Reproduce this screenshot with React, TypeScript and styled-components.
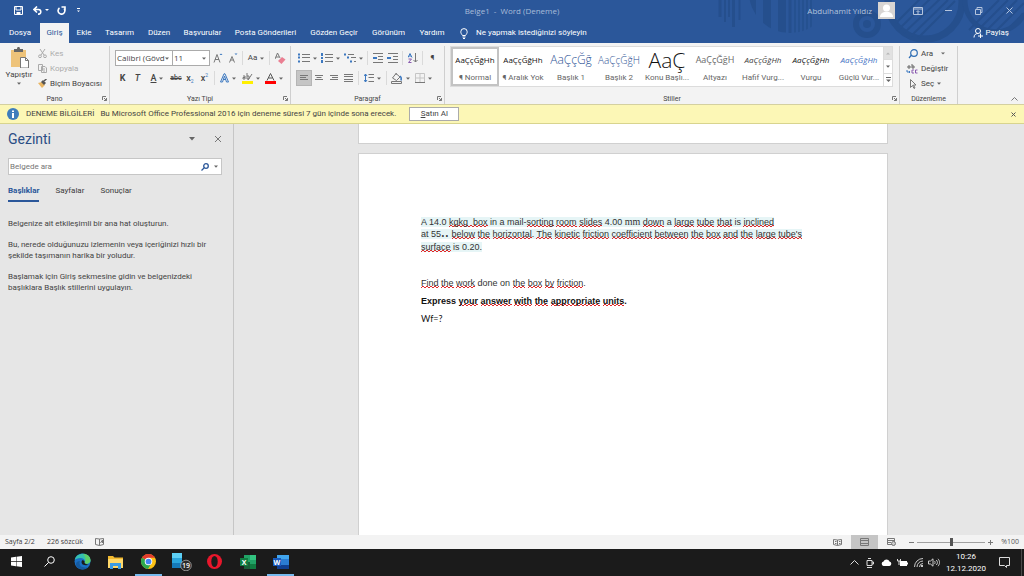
import React from "react";
import styled, { createGlobalStyle, css } from "styled-components";

const ui = `Roboto, "Open Sans", sans-serif`;
const blue = "#2b579a";

const GlobalStyle = createGlobalStyle`
  * { box-sizing: border-box; }
  body { margin: 0; font-family: ${ui}; font-size: 7px; line-height: 10px; color: #3b3b3b; background: #e6e6e6; }
  button, input, select { font: inherit; color: inherit; margin: 0; padding: 0; border: 0; background: none; border-radius: 0; }
  svg { display: block; flex: none; }
  p, h1, h2 { margin: 0; font-weight: 400; }
`;

const Window = styled.div`display: flex; flex-direction: column; height: 100vh; overflow: hidden;`;

/* ---------- title bar and tabs ---------- */
const Header = styled.header`position: relative; background: ${blue}; color: #fff; flex: none;`;
const Art = styled.svg`position: absolute; right: 0; top: 0;`;
const TitleBar = styled.div`
  position: relative; display: grid; grid-template-columns: 1fr auto 1fr; align-items: center; height: 23px; padding-bottom: 2px;
  font-family: "Open Sans", sans-serif;
`;
const QuickAccess = styled.div`display: flex; align-items: center; padding-left: 8px;`;
const TitleButton = styled.button<{ $w: number }>`
  display: flex; align-items: center; justify-content: center; width: ${p => p.$w}px; height: 20px; flex: none;
`;
const DocTitle = styled.h1`font-size: 8px; line-height: 12px; color: #a9bcd9; white-space: pre;`;
const Account = styled.div`display: flex; align-items: center; justify-content: flex-end; color: #b4c4dd; font-size: 8px;`;
const Avatar = styled.span`margin: 0 8px 0 6px;`;
const TabBar = styled.nav`position: relative; display: flex; height: 20px; font-size: 8px; white-space: nowrap;`;
const Tab = styled.button<{ $w: number; $active?: boolean }>`
  width: ${p => p.$w}px; height: 20px; text-align: center; flex: none;
  ${p => p.$active && css`background: #f3f3f3; color: ${blue};`}
`;
const TellMe = styled.button`display: flex; align-items: center; gap: 8px; margin-left: 9px;`;
const Share = styled.button`display: flex; align-items: center; gap: 2px; margin: 0 15px 0 auto;`;

/* ---------- ribbon ---------- */
const Ribbon = styled.section`display: flex; background: #f3f3f3; padding-top: 3px; height: 61px; flex: none; color: #444;`;
const Group = styled.div<{ $w?: number }>`
  display: flex; flex-direction: column; position: relative;
  ${p => (p.$w ? css`width: ${p.$w}px; flex: none;` : css`flex: 1; min-width: 0;`)}
  border-right: 1px solid #cfcfcf;
`;
const GroupBody = styled.div`flex: 1; min-height: 0; display: flex;`;
const GroupLabel = styled.div`display: grid; grid-template-columns: 10px 1fr 10px; height: 11px; line-height: 10px; text-align: center; align-items: center;`;
const Launcher = styled.button`display: flex; align-items: center; justify-content: center; height: 10px;`;
const PasteButton = styled.button`display: flex; flex-direction: column; align-items: center; width: 38px; padding-top: 1px; font-size: 8px; gap: 2px;`;
const Stack = styled.div`display: flex; flex-direction: column;`;
const ListButton = styled.button<{ $off?: boolean }>`
  display: flex; align-items: center; gap: 3px; height: 15px; font-size: 8px; white-space: nowrap; text-align: left;
  ${p => p.$off && css`color: #adadad;`}
`;
const Rows = styled.div`display: flex; flex-direction: column; gap: 4px; padding: 4px 0 0 5px;`;
const Row = styled.div`display: flex; align-items: center; height: 16px;`;
const Tool = styled.button<{ $w?: number; $on?: boolean }>`
  display: flex; align-items: center; justify-content: center; gap: 3px; width: ${p => p.$w ?? 15}px; height: 16px; flex: none; font-size: 8px;
  ${p => p.$on && css`background: #c5c5c5; border: 1px solid #b5b5b5;`}
`;
const Rule = styled.span`width: 1px; height: 14px; background: #dadada; margin: 0 2px;`;
const Combo = styled.label<{ $w: number }>`
  display: flex; align-items: center; width: ${p => p.$w}px; height: 16px; border: 1px solid #ababab; background: #fff; padding: 0 3px 0 1px;
  & + & { border-left: 0; }
  select { appearance: none; flex: 1; min-width: 0; font-family: "Open Sans", sans-serif; font-size: 8px; line-height: 12px; overflow: hidden; }
`;
const Letter = styled.span<{ $b?: boolean; $i?: boolean; $u?: boolean }>`
  font-size: 9px; line-height: 11px; font-weight: ${p => (p.$b ? 700 : 500)}; font-style: ${p => (p.$i ? "italic" : "normal")};
  text-decoration: ${p => (p.$u ? "underline" : "none")};
`;
const Struck = styled.s`font-size: 7px; line-height: 10px; font-weight: 500;`;
const Tiny = styled.sub<{ $up?: boolean }>`font-size: 5px; line-height: 5px; color: #3c78c0; align-self: ${p => (p.$up ? "flex-start" : "flex-end")};`;
const Tight = styled.span`display: flex; align-items: center; height: 11px;`;
const Bar = styled.span<{ $c: string }>`display: block; width: 11px; height: 3px; background: ${p => p.$c};`;
const Inked = styled.span`display: flex; flex-direction: column; align-items: center; line-height: 8px;`;

const Gallery = styled.div`display: flex; height: 41px; margin: 0 6px 0 5px; background: #fff; border: 1px solid #dcdcdc; flex: 1; min-width: 0;`;
const Style = styled.button<{ $on?: boolean }>`
  display: flex; flex-direction: column; align-items: center; width: 48px; height: 39px; flex: none;
  ${p => p.$on && css`box-shadow: inset 0 0 0 2px #c3c3c3;`}
`;
const Sample = styled.span<{ $size: number; $c: string; $i?: boolean }>`
  height: 26px; width: 44px; text-align: center; white-space: nowrap; font-family: "Open Sans", sans-serif; font-size: ${p => p.$size}px; line-height: 26px;
  color: ${p => p.$c}; font-style: ${p => (p.$i ? "italic" : "normal")}; font-weight: ${p => (p.$size > 9 ? 300 : 400)};
`;
const StyleName = styled.span`font-size: 8px; line-height: 10px; color: #666; white-space: nowrap;`;
const Scroller = styled.div`display: flex; flex-direction: column; width: 10px; margin-left: auto; border-left: 1px solid #dcdcdc;`;
const ScrollButton = styled.button<{ $off?: boolean }>`
  flex: 1; display: flex; align-items: center; justify-content: center; background: ${p => (p.$off ? "#e1e1e1" : "#fff")};
  & + & { border-top: 1px solid #dcdcdc; }
`;
const RibbonEnd = styled.div`width: 66px; display: flex; align-items: flex-end; justify-content: flex-end; padding: 0 6px 3px 0;`;

/* ---------- message bar ---------- */
const Message = styled.div`
  display: flex; align-items: center; height: 20px; flex: none; padding: 0 8px 0 7px; background: #fcf7b6; border-top: 1px solid #d4d0a0; border-bottom: 1px solid #d8d48e; color: #444; white-space: nowrap; font-size: 8px;
`;
const MessageTitle = styled.strong`font-weight: 400; margin: 0 6px 0 7px;`;
const Buy = styled.button`width: 50px; height: 14px; margin-left: 13px; background: #fff; border: 1px solid #ababab; line-height: 12px;`;
const Close = styled.button`margin-left: auto;`;

/* ---------- workspace ---------- */
const Work = styled.div`display: flex; flex: 1; min-height: 0;`;
const Pane = styled.aside`width: 234px; flex: none; border-right: 1px solid #c6c6c6; padding: 6px 11px 0 8px; font-size: 8px; line-height: 11px;`;
const PaneHead = styled.div`display: flex; align-items: center; height: 18px; gap: 19px;`;
const PaneTitle = styled.h2`flex: 1; font-size: 14px; line-height: 18px; color: #2a4d85;`;
const Search = styled.label`
  display: flex; align-items: center; gap: 5px; height: 17px; margin: 10px 0 0; padding: 0 3px 0 1px; border: 1px solid #c6c6c6; background: #fff;
  input { flex: 1; min-width: 0; outline: 0; }
  input::placeholder { color: #767676; opacity: 1; }
`;
const PaneTabs = styled.div`display: flex; margin: 10px 0 16px; gap: 16px;`;
const PaneTab = styled.button<{ $on?: boolean }>`
  height: 17px; padding-bottom: 4px; border-bottom: 2px solid transparent;
  ${p => p.$on && css`color: ${blue}; font-weight: 700; border-color: ${blue};`}
`;
const Hint = styled.p`margin-bottom: 10px; color: #444;`;

const Canvas = styled.main`flex: 1; min-width: 0; display: flex; flex-direction: column; align-items: center; gap: 9px; padding-right: 12px; overflow: hidden;`;
const PageEnd = styled.div`width: 530px; max-width: 100%; height: 20px; flex: none; background: #fff; border: 1px solid #d0d0d0; border-top: 0;`;
const Page = styled.article`
  width: 530px; max-width: 100%; flex: 1; background: #fff; border: 1px solid #d0d0d0; border-bottom: 0; padding: 62px 62px 0;
  font-family: "Liberation Sans", Arial, sans-serif; font-size: 9px; line-height: 12px; color: #333;
`;
const Problem = styled.p`margin-bottom: 24px; white-space: nowrap;`;
const Shade = styled.span`background: #e6f5f6;`;
const Para = styled.p<{ $b?: boolean }>`margin-bottom: 6px; color: ${p => (p.$b ? "#111" : "#333")}; font-weight: ${p => (p.$b ? 700 : 400)};`;
const Answer = styled.p`font-family: Lato, "Open Sans", sans-serif; color: #111;`;
const Misspelt = styled.span`
  background: url("data:image/svg+xml,%3Csvg xmlns='http://www.w3.org/2000/svg' width='4' height='2'%3E%3Cpath d='M0 2L2 0L4 2' fill='none' stroke='%23e02828'/%3E%3C/svg%3E") left bottom repeat-x;
`;
const Serif = styled.span`font-family: "Liberation Serif", serif; font-size: 10px;`;
const Degrees = styled.span`font-size: 6px;`;

/* ---------- status bar and taskbar ---------- */
const Status = styled.footer`display: flex; align-items: center; height: 14px; flex: none; background: #f3f3f3; padding: 0 5px; gap: 12px; font-family: "Open Sans", sans-serif;`;
const View = styled.button<{ $on?: boolean }>`display: flex; align-items: center; justify-content: center; width: 27px; height: 14px; background: ${p => (p.$on ? "#c5c5c5" : "none")};`;
const Views = styled.div`display: flex; margin-left: auto;`;
const Zoom = styled.div`display: flex; align-items: center; gap: 3px; margin-left: -8px; color: #555;`;
const Range = styled.input`
  appearance: none; width: 68px; height: 10px; background: linear-gradient(#a0a0a0, #a0a0a0) center / 100% 1px no-repeat;
  &::-webkit-slider-thumb { appearance: none; width: 3px; height: 8px; background: #555; }
`;
const Percent = styled.span`margin-left: 5px;`;

const Taskbar = styled.footer`display: flex; height: 27px; flex: none; background: #1b1b1b; color: #fff;`;
const Task = styled.button<{ $open?: boolean }>`
  display: flex; align-items: center; justify-content: center; width: 33px; height: 27px; border-bottom: 2px solid transparent;
  ${p => p.$open && css`box-shadow: inset 0 -2px #76b9ed; border: 0; padding-bottom: 2px; width: 27px; margin: 0 3px;`}
`;
const Tray = styled.div`display: flex; align-items: center; margin-left: auto;`;
const TrayButton = styled.button`width: 16px; height: 27px; display: flex; align-items: center; justify-content: center;`;
const Clock = styled.time`width: 48px; text-align: center; font-size: 8px; line-height: 12px;`;
const Notice = styled.button`width: 28px; display: flex; justify-content: center; margin-right: 3px;`;
const Desktop = styled.span`width: 3px; height: 27px; border-left: 1px solid #4a4a4a;`;

type IconProps = { w?: number; h?: number; box?: string; stroke?: string; sw?: number; children: React.ReactNode };
const Icon = ({ w = 10, h = 10, box, stroke = "#777", sw = 1, children }: IconProps) => (
  <svg width={w} height={h} viewBox={box ?? `0 0 ${w} ${h}`} fill="none" stroke={stroke} strokeWidth={sw} aria-hidden="true">{children}</svg>
);
const Caret = () => (
  <Icon w={4} h={3} stroke="none"><path d="M0 .5h4L2 2.7z" fill="#666" /></Icon>
);

const tabs: [string, number][] = [["Dosya", 40], ["Giriş", 29], ["Ekle", 30], ["Tasarım", 41], ["Düzen", 38], ["Başvurular", 49], ["Posta Gönderileri", 77], ["Gözden Geçir", 60], ["Görünüm", 49], ["Yardım", 38]];
const styles: { name: string; text: string; size: number; c: string; i?: boolean }[] = [
  { name: "¶ Normal", text: "AaÇçĞğHh", size: 8, c: "#111" },
  { name: "¶ Aralık Yok", text: "AaÇçĞğHh", size: 8, c: "#111" },
  { name: "Başlık 1", text: "AaÇçĞğ", size: 12, c: "#2f5496" },
  { name: "Başlık 2", text: "AaÇçĞğH", size: 10, c: "#2f5496" },
  { name: "Konu Başlı...", text: "AaÇ", size: 21, c: "#111" },
  { name: "Altyazı", text: "AaÇçĞğH", size: 9, c: "#6a6a6a" },
  { name: "Hafif Vurg...", text: "AaÇçĞğHh", size: 8, c: "#404040", i: true },
  { name: "Vurgu", text: "AaÇçĞğHh", size: 8, c: "#111", i: true },
  { name: "Güçlü Vur...", text: "AaÇçĞğHh", size: 8, c: "#4472c4", i: true },
];

const HeaderArt = () => (
  <Art width="310" height="43" viewBox="714 0 310 43" fill="none" stroke="#254f8d" aria-hidden="true">
    <defs><clipPath id="disc"><circle cx="790" cy="-8" r="41" /></clipPath></defs>
    <path d="M720 0v17M733.500 0v27" strokeWidth="3" /><path d="M725 0v22M729 0v17M739.500 0v20" strokeWidth="2" />
    <g clipPath="url(#disc)"><path d="M752 0v40M767 0v40M782 0v40" strokeWidth="8" /><path d="M790 0v40" strokeWidth="3" /><path d="M795 0v40M799 0v40M803 0v40M807 0v40M811 0v40" strokeWidth="1.500" /></g>
    <circle cx="867" cy="24" r="11" strokeWidth="6" /><circle cx="867" cy="24" r="4" fill="#254f8d" stroke="none" />
    <circle cx="925" cy="2" r="37" strokeWidth="7" />
    <path d="M896 23l24-24M899 29l31-30M904 33l36-34M910 37l38-37M918 38l37-37" strokeWidth="2" />
    <path d="M969 30l30-30M975 33l33-33M983 34l34-34M991 36l33-33M1001 36l23-23" strokeWidth="2" />
    <path d="M965 0a31 31 0 0 0 59 14" strokeWidth="5" />
  </Art>
);

const Lines = ({ a = "", b }: { a?: string; b: string }) => (
  <Icon w={12} h={10}><path d={b} />{a && <path d={a} stroke="#3c78c0" strokeWidth="2" />}</Icon>
);
const LauncherIcon = () => <Icon w={5} h={5}><path d="M.5 4V.5H4M2 2l2.500 2.500M4.500 2v2.500H2" /></Icon>;
const W = Misspelt;

export default function App() {
  return (
    <Window>
      <GlobalStyle />
      <Header>
        <HeaderArt />
        <TitleBar>
          <QuickAccess>
            <TitleButton $w={20} aria-label="Kaydet"><Icon w={9} h={9} stroke="#fff"><path d="M.5.5h8v8h-8zM2 .5v3.500h5V.5" /><path d="M2.500 6h4v3h-4z" fill="#fff" stroke="none" /></Icon></TitleButton>
            <TitleButton $w={26} aria-label="Geri al"><Icon w={9} h={9} stroke="#fff" sw={1.6}><path d="M1 3.500h4.500a2.300 2.300 0 0 1 0 4.600H5M4 .5l-3 3 3 3" /></Icon><Icon w={8} h={3} stroke="none"><path d="M3 0h4L5 2z" fill="#fff" /></Icon></TitleButton>
            <TitleButton $w={14} aria-label="Yinele"><Icon w={9} h={9} stroke="#fff" sw={1.6}><path d="M2.500 2A3.400 3.400 0 1 0 7 2.500M4.500 1h3.500v3.500" /></Icon></TitleButton>
            <TitleButton $w={22} aria-label="Özelleştir"><Icon w={4} h={5} stroke="none"><path d="M0 0h3v1H0zM0 2.500h3L1.500 4z" fill="#fff" /></Icon></TitleButton>
          </QuickAccess>
          <DocTitle>Belge1  -  Word (Deneme)</DocTitle>
          <Account>
            <span>Abdulhamit Yıldız</span>
            <Avatar><Icon w={17} h={17} stroke="none"><path d="M0 0h17v17H0z" fill="#d8d5d3" /><circle cx="8.500" cy="6" r="3.500" fill="#fff" /><path d="M2 15c0-7 13-7 13 0z" fill="#fff" /></Icon></Avatar>
            <TitleButton $w={30} aria-label="Şerit seçenekleri"><Icon w={10} h={8} stroke="#b4c4dd"><path d="M.5.5h9v7h-9zM.5 2h9M5 7V4M3.500 5L5 3.500 6.500 5" /></Icon></TitleButton>
            <TitleButton $w={31} aria-label="Küçült"><Icon w={7} h={2} stroke="#b4c4dd"><path d="M0 .5h7" /></Icon></TitleButton>
            <TitleButton $w={30} aria-label="Geri yükle"><Icon w={8} h={8} stroke="#b4c4dd"><path d="M.5 2.500h5v5h-5zM2 2.500v-2h5v5H5.500" /></Icon></TitleButton>
            <TitleButton $w={30} aria-label="Kapat"><Icon w={7} h={7} stroke="#b4c4dd"><path d="M.5.5l6 6M6.500.5l-6 6" /></Icon></TitleButton>
          </Account>
        </TitleBar>
        <TabBar>
          {tabs.map(([t, w], i) => <Tab key={t} $w={w} $active={i === 1}>{t}</Tab>)}
          <TellMe><Icon w={8} h={11} stroke="#fff"><path d="M2.500 7.500C1.500 6 .8 5.200.8 3.800a3.200 3.200 0 0 1 6.400 0C7.200 5.200 6.500 6 5.500 7.500zM2.500 9h3M3 10.500h2" /></Icon>Ne yapmak istediğinizi söyleyin</TellMe>
          <Share><Icon w={10} h={10} stroke="#fff"><circle cx="5" cy="3" r="2.500" /><path d="M1 9.500c0-3 2-4 4-4M5 8h5M7.500 5.500v5" /></Icon>Paylaş</Share>
        </TabBar>
      </Header>

      <Ribbon>
        <Group $w={110}>
          <GroupBody>
            <PasteButton>
              <Icon w={20} h={21} stroke="none"><path d="M2 3h15v17H2z" fill="#eec37a" /><path d="M5 2h3c0-3 3-3 3 0h3v3H5z" fill="#666" /><path d="M11.500 10.500h5l3 3v7.500h-8z" fill="#fff" stroke="#777" /><path d="M16.500 10.500v3h3" stroke="#777" fill="none" /></Icon>
              Yapıştır<Caret />
            </PasteButton>
            <Stack>
              <ListButton $off><Icon w={9} h={9} stroke="#aaa"><path d="M2 0l4 6M7 0L3 6" /><circle cx="2" cy="7.300" r="1.400" /><circle cx="7" cy="7.300" r="1.400" /></Icon>Kes</ListButton>
              <ListButton $off><Icon w={9} h={9} stroke="#aaa"><path d="M.5.5h4v6h-4zM3.500 2.500H7L8.500 4v4.500h-5zM5 5h2M5 7h2" /></Icon>Kopyala</ListButton>
              <ListButton><Icon w={9} h={9} stroke="none"><path d="M0 4l4-1 3 3-3 3z" fill="#e9b562" /><path d="M3 3l2-2 3 3-2 2z" fill="#555" /><path d="M6 2l2.500-2" stroke="#555" strokeWidth="1.500" /></Icon>Biçim Boyacısı</ListButton>
            </Stack>
          </GroupBody>
          <GroupLabel><span /><span>Pano</span><Launcher aria-label="Pano ayarları"><LauncherIcon /></Launcher></GroupLabel>
        </Group>

        <Group $w={181}>
          <GroupBody>
            <Rows>
              <Row>
                <Combo $w={58}><select aria-label="Yazı tipi"><option>Calibri (Gövd</option></select><Caret /></Combo>
                <Combo $w={37}><select aria-label="Boyut"><option>11</option></select><Caret /></Combo>
                <Tool $w={15} aria-label="Büyüt"><Icon><path d="M1 9.500L4 1.500 7 9.500M2 6.500h4" /><path d="M6.500 2L8 .5 9.500 2z" fill="#3c78c0" stroke="none" /></Icon></Tool>
                <Tool $w={15} aria-label="Küçült"><Icon><path d="M1.500 9.500L4 3.500 6.500 9.500M2.500 7h3" /><path d="M6.500.5h3L8 2z" fill="#3c78c0" stroke="none" /></Icon></Tool>
                <Rule />
                <Tool $w={22}>Aa<Caret /></Tool>
                <Rule />
                <Tool $w={17} aria-label="Biçimlendirmeyi temizle"><Icon w={11} h={11}><path d="M0 6l2.500-6L5 5M1 4h3" /><path d="M3 8l4-4 3.500 2.500L6.500 11z" fill="#ea7f92" stroke="none" /></Icon></Tool>
              </Row>
              <Row>
                <Tool $w={15}><Letter $b>K</Letter></Tool>
                <Tool $w={15}><Letter $i>T</Letter></Tool>
                <Tool $w={24}><Letter $u>A</Letter><Caret /></Tool>
                <Tool $w={14}><Struck>abc</Struck></Tool>
                <Tool $w={14}><Tight><Letter>x</Letter><Tiny>2</Tiny></Tight></Tool>
                <Tool $w={15}><Tight><Letter>x</Letter><Tiny $up>2</Tiny></Tight></Tool>
                <Rule />
                <Tool $w={22} aria-label="Metin efektleri"><Icon w={9} h={10} stroke="#3c78c0"><path d="M.5 9L4 .8h1L8.500 9H6.500L4.500 3 2.500 9zM3 6.500h3" /></Icon><Caret /></Tool>
                <Tool $w={24} aria-label="Vurgu rengi"><Inked><Icon w={11} h={8}><path d="M1 3h2v3H1V4.500h2M5 0v6h2V3H5M10 1L6 7" /></Icon><Bar $c="#ffef00" /></Inked><Caret /></Tool>
                <Tool $w={22} aria-label="Yazı rengi"><Inked><Icon w={9} h={8} stroke="#555"><path d="M1 7.500L4.500 .5 8 7.500M2.500 5h4" /></Icon><Bar $c="#f00" /></Inked><Caret /></Tool>
              </Row>
            </Rows>
          </GroupBody>
          <GroupLabel><span /><span>Yazı Tipi</span><Launcher aria-label="Yazı tipi ayarları"><LauncherIcon /></Launcher></GroupLabel>
        </Group>

        <Group $w={154}>
          <GroupBody>
            <Rows>
              <Row>
                <Tool $w={23} aria-label="Madde işaretleri"><Lines a="M0 1.500h2M0 4.500h2M0 8.500h2" b="M4 1.500h8M4 4.500h8M4 8.500h8" /><Caret /></Tool>
                <Tool $w={23} aria-label="Numaralandırma"><Lines a="M1 0v3M1 4v2M1 7v3" b="M4 1.500h8M4 4.500h8M4 8.500h8" /><Caret /></Tool>
                <Tool $w={23} aria-label="Çok düzeyli liste"><Lines a="M0 1.500h2M3 4.500h2M6 8.500h2" b="M4 1.500h6M7 4.500h5M10 8.500h2" /><Caret /></Tool>
                <Rule />
                <Tool aria-label="Girintiyi azalt"><Lines b="M1 .5h10M6 3.500h5M6 6.500h5M1 9.500h10" a="M5 5H1" /></Tool>
                <Tool aria-label="Girintiyi artır"><Lines b="M1 .5h10M6 3.500h5M6 6.500h5M1 9.500h10" a="M0 5h4" /></Tool>
                <Rule />
                <Tool aria-label="Sırala"><Icon><path d="M0 4.500L2 .5l2 4M1 3h2" stroke="#3c78c0" /><path d="M.5 6h3L.5 9.500h3" stroke="#8a5bb0" /><path d="M7.500 0v9M5.500 7l2 2 2-2" /></Icon></Tool>
                <Rule />
                <Tool aria-label="Paragraf işaretleri">¶</Tool>
              </Row>
              <Row>
                <Tool $w={16} $on aria-label="Sola hizala"><Icon w={8}><path d="M0 2.500h8M0 4.500h6M0 6.500h8" /></Icon></Tool>
                <Tool $w={14} aria-label="Ortala"><Icon w={8}><path d="M0 2.500h8M1.500 4.500h5M0 6.500h8" /></Icon></Tool>
                <Tool aria-label="Sağa hizala"><Icon w={8}><path d="M0 2.500h8M2 4.500h6M0 6.500h8" /></Icon></Tool>
                <Tool aria-label="İki yana yasla"><Icon w={9}><path d="M0 1.500h9M0 3.500h9M0 6.500h9M0 8.500h9" /></Icon></Tool>
                <Rule />
                <Tool $w={23} aria-label="Satır aralığı"><Icon><path d="M4.500 1.500H10M4.500 4.500H10M4.500 8.500H10" /><path d="M1.500 1v8M0 3l1.500-2L3 3M0 7l1.500 2L3 7" stroke="#3c78c0" /></Icon><Caret /></Tool>
                <Rule />
                <Tool $w={23} aria-label="Gölgelendirme"><Icon w={12} h={11}><path d="M5 .5L1.500 5l4 2.500L9 4zM5 2V0M.5 8.500h10v2H.5z" /><path d="M9 3c1.500 1 1.500 2.500 1 4.500" stroke="#3c78c0" strokeWidth="1.500" /></Icon><Caret /></Tool>
                <Tool $w={23} aria-label="Kenarlıklar"><Icon><path d="M.5.5h9v9h-9zM5 1v8M1 5h8" stroke="#c5c5c5" /><path d="M0 9.500h10" /></Icon><Caret /></Tool>
              </Row>
            </Rows>
          </GroupBody>
          <GroupLabel><span /><span>Paragraf</span><Launcher aria-label="Paragraf ayarları"><LauncherIcon /></Launcher></GroupLabel>
        </Group>

        <Group>
          <GroupBody>
            <Gallery>
              {styles.map((s, i) => (
                <Style key={s.name} $on={i === 0}>
                  <Sample $size={s.size} $c={s.c} $i={s.i}>{s.text}</Sample>
                  <StyleName>{s.name}</StyleName>
                </Style>
              ))}
              <Scroller>
                <ScrollButton $off aria-label="Yukarı"><Icon w={4} h={3} stroke="none"><path d="M0 2.500h4L2 .5z" fill="#b5b5b5" /></Icon></ScrollButton>
                <ScrollButton aria-label="Aşağı"><Caret /></ScrollButton>
                <ScrollButton aria-label="Diğer"><Icon w={5} h={5} stroke="none"><path d="M0 0h5v1H0zM0 2.500h5L2.500 5z" fill="#666" /></Icon></ScrollButton>
              </Scroller>
            </Gallery>
          </GroupBody>
          <GroupLabel><span /><span>Stiller</span><Launcher aria-label="Stil ayarları"><LauncherIcon /></Launcher></GroupLabel>
        </Group>

        <Group $w={58}>
          <GroupBody>
            <Stack>
              <ListButton><Icon w={18} h={10} stroke="#2e6db4" sw={1.2}><circle cx="14" cy="4" r="3.300" /><path d="M11.500 6L9 9" /></Icon>Ara<Icon w={9} h={3} stroke="none"><path d="M5 .5h4L7 2.500z" fill="#666" /></Icon></ListButton>
              <ListButton><Icon w={18} h={10}><path d="M8 2h2v2H8zM12 0v4h2V2h-2" stroke="#666" /><path d="M7 6v2h3M9 7l1 1-1 1" stroke="#3c78c0" /><path d="M14 6h-2v3h2M17.500 6h-2v3h2" stroke="#8a5bb0" /></Icon>Değiştir</ListButton>
              <ListButton><Icon w={18} h={10}><path d="M10.500.5v8l2-2 1.500 3 1-.5-1.500-3h2.500z" /></Icon>Seç<Caret /></ListButton>
            </Stack>
          </GroupBody>
          <GroupLabel><span /><span>Düzenleme</span><span /></GroupLabel>
        </Group>
        <RibbonEnd><button aria-label="Şeridi daralt"><Icon w={7} h={4}><path d="M.5 3.500l3-3 3 3" /></Icon></button></RibbonEnd>
      </Ribbon>

      <Message>
        <Icon w={12} h={12} stroke="none"><circle cx="6" cy="6" r="6" fill="#3f7dbb" /><path d="M5 2.500h2v1.500H5zM5 5h2v5H5z" fill="#fff" /></Icon>
        <MessageTitle>DENEME BİLGİLERİ</MessageTitle>
        <span>Bu Microsoft Office Professional 2016 için deneme süresi 7 gün içinde sona erecek.</span>
        <Buy><u>S</u>atın Al</Buy>
        <Close aria-label="İletiyi kapat"><Icon w={5} h={5} stroke="#555"><path d="M.5.5l4 4M4.500.5l-4 4" /></Icon></Close>
      </Message>

      <Work>
        <Pane>
          <PaneHead>
            <PaneTitle>Gezinti</PaneTitle>
            <button aria-label="Bölme seçenekleri"><Icon w={6} h={4} stroke="none"><path d="M0 0h6L3 3.500z" fill="#666" /></Icon></button>
            <button aria-label="Bölmeyi kapat"><Icon w={8} h={8}><path d="M1 1l6 6M7 1L1 7" /></Icon></button>
          </PaneHead>
          <Search>
            <input type="text" placeholder="Belgede ara" aria-label="Belgede ara" />
            <Icon w={8} h={8} stroke={blue} sw={1.3}><circle cx="5" cy="3" r="2.300" /><path d="M3.500 4.500L.5 7.500" /></Icon><Caret />
          </Search>
          <PaneTabs><PaneTab $on>Başlıklar</PaneTab><PaneTab>Sayfalar</PaneTab><PaneTab>Sonuçlar</PaneTab></PaneTabs>
          <Hint>Belgenize ait etkileşimli bir ana hat oluşturun.</Hint>
          <Hint>Bu, nerede olduğunuzu izlemenin veya içeriğinizi hızlı bir<br />şekilde taşımanın harika bir yoludur.</Hint>
          <Hint>Başlamak için Giriş sekmesine gidin ve belgenizdeki<br />başlıklara Başlık stillerini uygulayın.</Hint>
        </Pane>
        <Canvas>
          <PageEnd />
          <Page>
            <Problem>
              <Shade>
                A 14.0 <W>kgkg&nbsp; box</W> in a mail-<W>sorting</W> <W>room</W> <W>slides</W> 4.00 <Serif>mm</Serif> <W>down</W> a <W>large</W> <W>tube</W> <W>that</W> is <W>inclined</W><br />
                at 55<Degrees>∘∘</Degrees> <W>below</W> <W>the</W> <W>horizontal</W>. <W>The</W> <W>kinetic</W> <W>friction</W> <W>coefficient</W> <W>between</W> <W>the</W> <W>box</W> <W>and</W> <W>the</W> <W>large</W> <W>tube's</W><br />
                <W>surface</W> is 0.20.
              </Shade>
            </Problem>
            <Para><W>Find</W> <W>the</W> <W>work</W> done on <W>the</W> <W>box</W> <W>by</W> <W>friction</W>.</Para>
            <Para $b>Express <W>your</W> <W>answer</W> <W>with</W> <W>the</W> <W>appropriate</W> <W>units</W>.</Para>
            <Answer>Wf=?</Answer>
          </Page>
        </Canvas>
      </Work>

      <Status>
        <span>Sayfa 2/2</span><span>226 sözcük</span>
        <Icon w={9} h={8}><path d="M4.500 1L.5.5v6l4 1zM4.500 1l4-.5v6l-4 1M5.500 5l2-3v3" /></Icon>
        <Views>
          <View aria-label="Okuma modu"><Icon w={9} h={7}><path d="M4.500 1L.5.5v5l4 1zM4.500 1l4-.5v5l-4 1M2 2.500h1.500M2 4.500h1.500M6 2.500h1.500M6 4.500h1.500" /></Icon></View>
          <View $on aria-label="Yazdırma düzeni"><Icon w={9} h={8}><path d="M.5.5h8v7h-8zM1 2.500h7M1 5.500h7" /></Icon></View>
          <View aria-label="Web düzeni"><Icon w={9} h={8}><path d="M.5.5h7v6h-7zM1 2.500h6M1 4.500h3" /><circle cx="6.500" cy="5.500" r="2" fill="#ccc" /></Icon></View>
        </Views>
        <Zoom>
          <button aria-label="Uzaklaştır"><Icon w={5} h={5}><path d="M0 2.500h5" /></Icon></button>
          <Range type="range" defaultValue={50} aria-label="Yakınlaştırma" />
          <button aria-label="Yakınlaştır"><Icon w={5} h={5}><path d="M0 2.500h5M2.500 0v5" /></Icon></button>
          <Percent>%100</Percent>
        </Zoom>
      </Status>

      <Taskbar>
        <Task aria-label="Başlat"><Icon w={11} h={11} stroke="none"><path d="M0 1.500l5-.7V5H0zM5.500.7L11 0v5H5.500zM0 5.700h5v4.500l-5-.7zM5.500 5.700H11V11l-5.500-.7z" fill="#fff" /></Icon></Task>
        <Task aria-label="Ara"><Icon w={11} h={11} stroke="#fff"><circle cx="7" cy="4" r="3.300" /><path d="M4.500 6.500L.5 10.500" /></Icon></Task>
        <Task aria-label="Edge"><Icon w={17} h={17} stroke="none"><circle cx="8.500" cy="8.500" r="8" fill="#1a6fc4" /><path d="M.7 7C2-1.500 16-1.500 16.500 7c.3 4-4.500 4.500-6 3 1.500-3-1-5-4-5C3.500 5 1.500 6 .7 7z" fill="#35c1b0" /><path d="M9 1c5 0 7.500 3 7.500 6.500 0 3-4 4-6 2.500C12 7 12 4 9 1z" fill="#5fd068" /><path d="M6 8c-2 4 2 8 8 6-3 4-12 3-12-3 0-2 2-3 4-3z" fill="#155a9f" /><path d="M8 7.500c-1.500 3 1 5.500 5.500 4.500l2.500-1c-1.500 1-4 .5-5.500-1C11 8 9.500 7 8 7.500z" fill="#1b1b1b" /></Icon></Task>
        <Task aria-label="Dosya Gezgini"><Icon w={15} h={14} stroke="none"><path d="M0 1h5l1.500 1.500H15V13H0z" fill="#f2b92f" /><path d="M0 4h15v9H0z" fill="#ffd869" /><path d="M2 8h11v6H10v-3H5v3H2z" fill="#3b9be4" /></Icon></Task>
        <Task $open aria-label="Chrome"><Icon w={15} h={15} box="0 0 30 30" stroke="none"><circle cx="15" cy="15" r="15" fill="#fbc116" /><path d="M15 15L2 7.500A15 15 0 0 1 28 7.500H15z" fill="#e33b2e" /><path d="M15 15L2 7.500A15 15 0 0 0 14 30l7-11.500z" fill="#2da94f" /><circle cx="15" cy="15" r="7.500" fill="#fff" /><circle cx="15" cy="15" r="5.700" fill="#4285f4" /></Icon></Task>
        <Task aria-label="Telefonunuz"><Icon w={21} h={18} stroke="none"><path d="M1 0h10v15H1z" fill="#2aa5dc" /><path d="M1 0h10v5H1z" fill="#5ed0f5" /><path d="M1 10h10v5H1z" fill="#1579b8" /><circle cx="15" cy="12.500" r="5.300" fill="#2a2a2a" stroke="#aaa" strokeWidth=".8" /><text x="15" y="15" fontSize="7" fontWeight="600" textAnchor="middle" fill="#fff" fontFamily="Open Sans">19</text></Icon></Task>
        <Task aria-label="Opera"><Icon w={15} h={15} stroke="none"><ellipse cx="7.500" cy="7.500" rx="7.500" ry="7.500" fill="#e8172c" /><ellipse cx="7.500" cy="7.500" rx="3.200" ry="5.500" fill="#1b1b1b" /></Icon></Task>
        <Task aria-label="Excel"><Icon w={16} h={14} stroke="none"><path d="M4 0h12v14H4z" fill="#21a366" /><path d="M10 0h6v5h-6z" fill="#33c481" /><path d="M4 7h6v7H4z" fill="#185c37" /><path d="M10 9h6v5h-6z" fill="#107c41" /><path d="M0 3h8v8H0z" fill="#107c41" /><text x="4" y="9.500" fontSize="7" fontWeight="700" textAnchor="middle" fill="#fff" fontFamily="Open Sans">X</text></Icon></Task>
        <Task $open aria-label="Word"><Icon w={16} h={14} stroke="none"><path d="M4 0h12v14H4z" fill="#2b7cd3" /><path d="M4 0h12v4H4z" fill="#41a5ee" /><path d="M4 10h12v4H4z" fill="#103f91" /><path d="M0 3h8v8H0z" fill="#185abd" /><text x="4" y="9.500" fontSize="7" fontWeight="700" textAnchor="middle" fill="#fff" fontFamily="Open Sans">W</text></Icon></Task>
        <Tray>
          <TrayButton aria-label="Gizli simgeler"><Icon w={9} h={5} stroke="#ddd"><path d="M.5 4.500l4-4 4 4" /></Icon></TrayButton>
          <TrayButton aria-label="Java"><Icon w={8} h={10} stroke="#ddd"><path d="M1 2.500h5v5H1zM6 4h1.500v2H6M1 9.500h5M2 .5h3" /></Icon></TrayButton>
          <TrayButton aria-label="OneDrive"><Icon w={11} h={7} stroke="none"><path d="M2.500 7a2.300 2.300 0 0 1 0-4.500 3.200 3.200 0 0 1 6 0A2.300 2.300 0 0 1 8.500 7z" fill="#fff" /></Icon></TrayButton>
          <TrayButton aria-label="Pil"><Icon w={11} h={8} stroke="none"><path d="M3 2h7v5H3zM10 3.500h1v2h-1z" fill="#fff" /><path d="M.5 0v2h3V0M2 2v4" stroke="#ddd" /></Icon></TrayButton>
          <TrayButton aria-label="Kablosuz"><Icon w={9} h={9} stroke="#ccc"><path d="M.5 9A8.500 8.500 0 0 1 9 .5M3 9a6 6 0 0 1 6-6M5.500 9A3.500 3.500 0 0 1 9 5.500" /><circle cx="8" cy="8" r="1" fill="#fff" stroke="none" /></Icon></TrayButton>
          <TrayButton aria-label="Ses"><Icon w={12} h={9} stroke="#ccc"><path d="M.5 3h2L5 .8v7.400L2.500 6h-2zM6.500 3c.8 1 .8 2 0 3M8.300 2c1.500 1.500 1.500 3.500 0 5M10 .8c2 2.300 2 5 0 7.400" /></Icon></TrayButton>
          <Clock>10:26<br />12.12.2020</Clock>
          <Notice aria-label="Bildirimler"><Icon w={11} h={11} stroke="#ddd"><path d="M.5.5h10v8H7.500v2l-2-2h-5z" /></Icon></Notice>
          <Desktop />
        </Tray>
      </Taskbar>
    </Window>
  );
}
